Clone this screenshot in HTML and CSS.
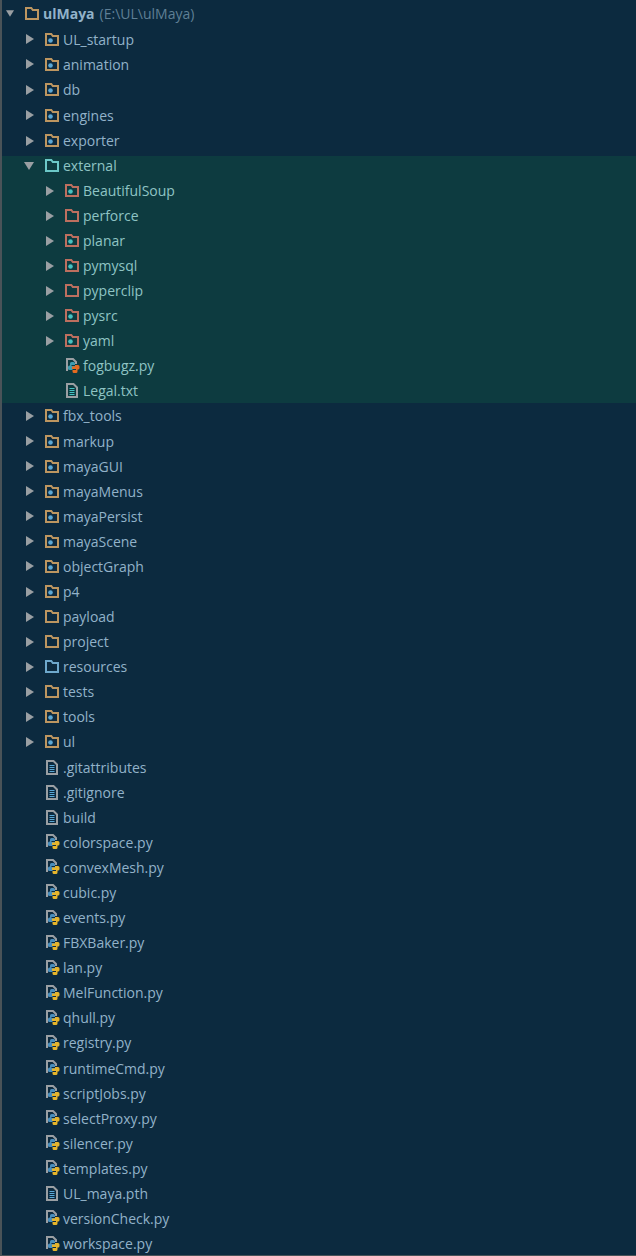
FILE: index.html
```html
<!DOCTYPE html>
<html>
<head>
<meta charset="utf-8">
<title>ulMaya</title>
<link rel="stylesheet" href="styles.css">
</head>
<body>
<svg class="defs" width="0" height="0" aria-hidden="true">
  <defs>
    <symbol id="folder" viewBox="0 0 14 13"><path d="M1 12V1h5.300l1.500 2H13v9z" fill="none" stroke="currentColor" stroke-width="2"/></symbol>
    <symbol id="pkg" viewBox="0 0 14 13"><path d="M1 12V1h5.300l1.500 2H13v9z" fill="none" stroke="currentColor" stroke-width="2"/><circle cx="5.500" cy="7.500" r="2.300" fill="var(--dot)"/></symbol>
    <symbol id="doc" viewBox="0 0 12 15"><path d="M1 1h6.500L11 4.500V14H1z" fill="none" stroke="#9a9fa3" stroke-width="2"/><path d="M3.500 5.500h5M3.500 7.500h5M3.500 9.500h5M3.500 11.500h5" stroke="var(--dot)" stroke-width="1"/></symbol>
    <symbol id="py" viewBox="0 0 14 16"><path d="M1 13V1h6l3 3v2" fill="none" stroke="#9a9fa3" stroke-width="2"/><path d="M4 5.500A1.500 1.500 0 0 1 5.500 4h2A1.500 1.500 0 0 1 9 5.500V7H5.500v1h4v2.500h-3V12h-3A1.500 1.500 0 0 1 2 10.500V9a1.500 1.500 0 0 1 1.500-1.500H4z" fill="var(--pyblue)"/><path d="M11.500 13.500A1.500 1.500 0 0 1 10 15H8a1.500 1.500 0 0 1-1.500-1.500V12H10v-1H6V8.500h3V7h3a1.500 1.500 0 0 1 1.500 1.500V10a1.500 1.500 0 0 1-1.500 1.500h-.5z" fill="var(--py)"/></symbol>
    <symbol id="open" viewBox="0 0 10 8"><path d="M0 0h10L5 8z" fill="#9a9fa3"/></symbol>
    <symbol id="shut" viewBox="0 0 8 10"><path d="M0 0l8 5-8 5z" fill="#9a9fa3"/></symbol>
  </defs>
</svg>
<main class="tree" id="tree"></main>
<script src="tree.js"></script>
</body>
</html>
```

FILE: tree.js
```js
const rows = [
  [0,'open','folder','ulMaya','root'],
  [1,'shut','pkg','UL_startup'],[1,'shut','pkg','animation'],[1,'shut','pkg','db'],[1,'shut','pkg','engines'],[1,'shut','pkg','exporter'],
  [1,'open','folder','external','ext'],
  [2,'shut','pkg','BeautifulSoup','lib'],[2,'shut','folder','perforce','lib'],[2,'shut','pkg','planar','lib'],[2,'shut','pkg','pymysql','lib'],[2,'shut','folder','pyperclip','lib'],[2,'shut','pkg','pysrc','lib'],[2,'shut','pkg','yaml','lib'],
  [2,'','py','fogbugz.py','lib'],[2,'','doc','Legal.txt','lib'],
  [1,'shut','pkg','fbx_tools'],[1,'shut','pkg','markup'],[1,'shut','pkg','mayaGUI'],[1,'shut','pkg','mayaMenus'],[1,'shut','pkg','mayaPersist'],[1,'shut','pkg','mayaScene'],[1,'shut','pkg','objectGraph'],[1,'shut','pkg','p4'],[1,'shut','folder','payload'],[1,'shut','folder','project'],
  [1,'shut','folder','resources','res'],[1,'shut','folder','tests'],[1,'shut','pkg','tools'],[1,'shut','pkg','ul'],
  [1,'','doc','.gitattributes'],[1,'','doc','.gitignore'],[1,'','doc','build'],
  [1,'','py','colorspace.py'],[1,'','py','convexMesh.py'],[1,'','py','cubic.py'],[1,'','py','events.py'],[1,'','py','FBXBaker.py'],[1,'','py','lan.py'],[1,'','py','MelFunction.py'],[1,'','py','qhull.py'],[1,'','py','registry.py'],[1,'','py','runtimeCmd.py'],[1,'','py','scriptJobs.py'],[1,'','py','selectProxy.py'],[1,'','py','silencer.py'],[1,'','py','templates.py'],
  [1,'','doc','UL_maya.pth'],[1,'','py','versionCheck.py'],[1,'','py','workspace.py']
];
const tree = document.getElementById('tree');
let group = null;
const svg = (id, cls) => `<svg class="${cls}"><use href="#${id}"/></svg>`;
rows.forEach(([depth, arrow, icon, name, kind]) => {
  const row = document.createElement('div');
  const inExternal = kind === 'ext' || kind === 'lib';
  row.className = `row depth${depth} ${kind || ''}`;
  row.innerHTML = `<span class="slot">${arrow ? svg(arrow, 'arrow ' + arrow) : ''}</span>` +
    svg(icon, 'icon ' + icon) +
    `<span class="name">${name}</span>` +
    (kind === 'root' ? '<span class="path">(E:\\UL\\ulMaya)</span>' : '');
  if (inExternal) {
    if (!group) { group = document.createElement('div'); group.className = 'selected'; tree.appendChild(group); }
    group.appendChild(row);
  } else {
    group = null;
    tree.appendChild(row);
  }
});
```

FILE: styles.css
```css
* { box-sizing: border-box; }
html, body { margin: 0; height: 100%; }
body {
  background: #0c2a3f;
  color: #92b2c9;
  font-family: "Open Sans", "Noto Sans", sans-serif;
  font-size: 14px;
  overflow: hidden;
  --dot: #5ba8d6;
  --py: #e6b52c;
  --pyblue: #4a8fbd;
}
.defs { position: absolute; }
.tree {
  height: 1256px;
  padding-top: 1px;
  border-left: 2px solid #4a5358;
  border-bottom: 1px solid #4a5358;
}
.row { display: flex; align-items: center; height: 25.4px; white-space: nowrap; }
.selected {
  display: flow-root;
  margin: 2.6px 0 0;
  background: #0d3b40;
  color: #8fc4c4;
  --dot: #46c2c2;
  --py: #e56b1f;
  --pyblue: #3f9db0;
}
.selected .row { height: 25px; }
.selected .ext { margin-top: -2.5px; }
.selected ~ .row { height: 25.08px; }
.depth0 { padding-left: 2px; }
.depth1 { padding-left: 22px; }
.depth2 { padding-left: 42px; }
.slot { display: flex; justify-content: flex-end; width: 10px; margin-right: 11px; flex: none; }
.arrow { display: block; flex: none; }
.arrow.shut { width: 8px; height: 10px; }
.arrow.open { width: 10px; height: 8px; }
.root .arrow.open { width: 8px; height: 7px; }
.icon { width: 14px; height: 13px; margin-right: 4px; flex: none; color: #bd9660; }
.icon.doc { width: 12px; height: 15px; margin-left: 1px; margin-right: 5px; }
.icon.py { width: 14px; height: 16px; margin-left: 1px; margin-right: 3px; }
.lib .icon { color: #bd6f5f; }
.ext .icon { color: #6cc8c8; }
.res .icon { color: #6ea8cc; }
.root .name { font-weight: 700; }
.path { margin-left: 5px; color: #5f7f95; }
```
